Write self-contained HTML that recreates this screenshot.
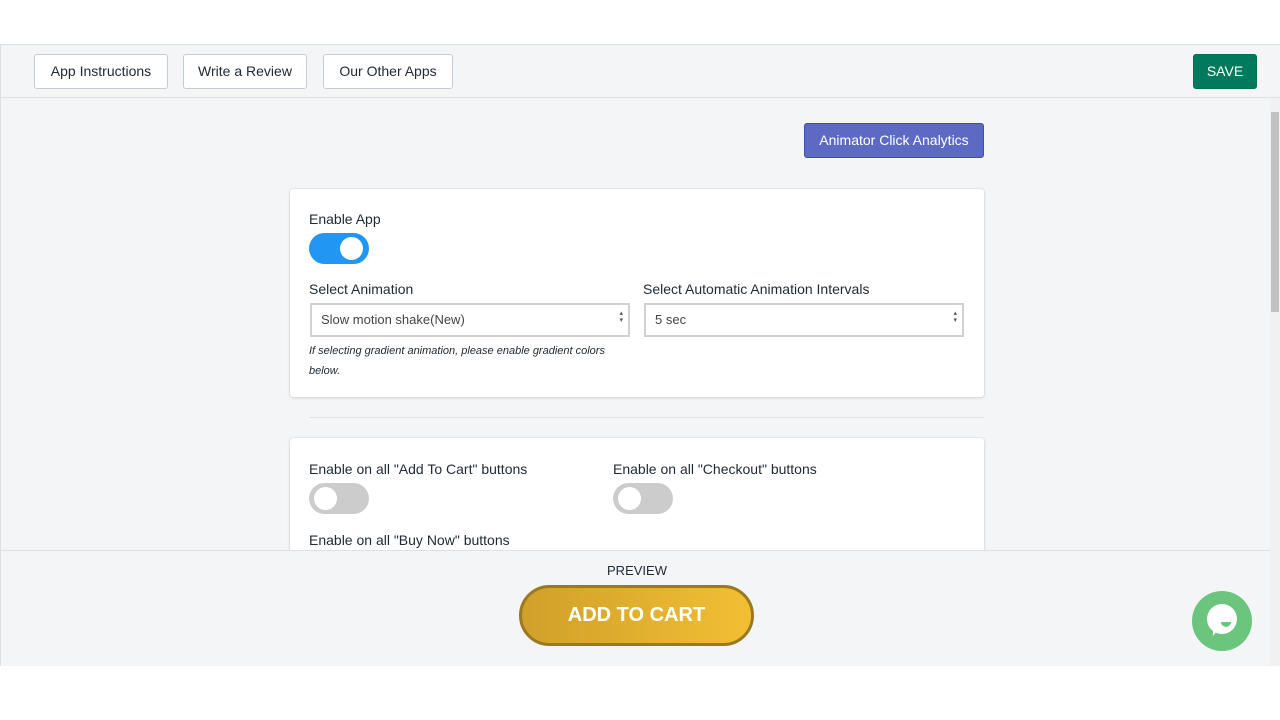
<!DOCTYPE html>
<html><head><style>
*{box-sizing:border-box;margin:0;padding:0}
body{width:1280px;height:720px;background:#fff;font-family:"Liberation Sans",sans-serif;color:#212b36;position:relative;overflow:hidden;font-size:14px}
.abs{position:absolute}
.top{left:0;top:44px;width:1280px;height:54px;background:#f4f5f7;border-top:1px solid #dcdfe3;border-bottom:1px solid #dcdfe3;border-left:1px solid #dcdfe3}
.btn{position:absolute;top:54px;height:35px;background:#fff;border:1px solid #c4cdd5;border-radius:3px;font-size:14px;line-height:33px;text-align:center;color:#212b36}
.main{left:0;top:98px;width:1270px;height:452px;background:#f4f5f7;border-left:1px solid #dcdfe3}
.card{position:absolute;background:#fff;box-shadow:0 0 0 1px rgba(63,63,68,.05),0 1px 3px rgba(63,63,68,.15);border-radius:3px}
.tog{position:absolute;width:60px;height:31px;border-radius:16px}
.tog i{position:absolute;top:4px;width:23px;height:23px;border-radius:50%;background:#fff}
.sel{position:absolute;height:34px;border:2px solid #cfd2d5;background:#fff;font-size:13px;line-height:30px;padding-left:9px;color:#444}
.sel:after{content:"\25B4\A\25BE";white-space:pre;position:absolute;right:5px;top:5px;font-size:7px;line-height:7px;color:#555}
.lbl{position:absolute;font-size:14px}
</style></head><body>
<div class="abs top"></div>
<div class="btn" style="left:34px;width:134px">App Instructions</div>
<div class="btn" style="left:183px;width:124px">Write a Review</div>
<div class="btn" style="left:323px;width:130px">Our Other Apps</div>
<div class="btn" style="left:1193px;width:64px;background:#007a5c;border-color:#006e52;color:#fff">SAVE</div>
<div class="abs main"></div>
<div class="abs" style="left:1270px;top:98px;width:10px;height:568px;background:#f1f1f1"></div>
<div class="abs" style="left:1271px;top:112px;width:8px;height:200px;background:#c1c1c1"></div>
<div class="abs" style="left:804px;top:123px;width:180px;height:35px;background:#5c6ac4;border:1px solid #3f4eae;border-radius:3px;color:#fff;line-height:33px;text-align:center;font-size:14px">Animator Click Analytics</div>
<div class="card" style="left:290px;top:189px;width:694px;height:208px"></div>
<div class="lbl" style="left:309px;top:211px">Enable App</div>
<div class="tog" style="left:309px;top:233px;background:#2196f3"><i style="left:31px"></i></div>
<div class="lbl" style="left:309px;top:281px">Select Animation</div>
<div class="lbl" style="left:643px;top:281px">Select Automatic Animation Intervals</div>
<div class="sel" style="left:310px;top:303px;width:320px">Slow motion shake(New)</div>
<div class="sel" style="left:644px;top:303px;width:320px">5 sec</div>
<div class="lbl" style="left:309px;top:341px;font-size:11px;font-style:italic;line-height:20px;width:320px">If selecting gradient animation, please enable gradient colors below.</div>
<div class="abs" style="left:309px;top:417px;width:675px;height:1px;background:#dfe3e8"></div>
<div class="card" style="left:290px;top:438px;width:694px;height:130px"></div>
<div class="lbl" style="left:309px;top:461px">Enable on all "Add To Cart" buttons</div>
<div class="lbl" style="left:613px;top:461px">Enable on all "Checkout" buttons</div>
<div class="tog" style="left:309px;top:483px;background:#ccc"><i style="left:5px"></i></div>
<div class="tog" style="left:613px;top:483px;background:#ccc"><i style="left:5px"></i></div>
<div class="lbl" style="left:309px;top:532px">Enable on all "Buy Now" buttons</div>
<div class="abs" style="left:0;top:550px;width:1270px;height:116px;background:#f4f5f7;border-top:1px solid #dcdfe3;border-left:1px solid #dcdfe3"></div>
<div class="abs" style="left:0;top:563px;width:1274px;text-align:center;font-size:13px;color:#212b36">PREVIEW</div>
<div class="abs" style="left:519px;top:585px;width:235px;height:61px;border-radius:31px;border:3px solid #9a7a20;background:linear-gradient(90deg,#d0a02a,#f2bf33);color:#fff;font-weight:bold;font-size:20px;text-align:center;line-height:55px">ADD TO CART</div>
<div class="abs" style="left:1192px;top:591px;width:60px;height:60px;border-radius:50%;background:#6bc57d"></div>
<div class="abs" style="left:1207px;top:604px;width:30px;height:30px;border-radius:50%;background:#fff"></div>
<div class="abs" style="left:1213px;top:628px;width:0;height:0;border-left:6px solid #fff;border-bottom:8px solid transparent"></div>
<div class="abs" style="left:1221px;top:622px;width:10px;height:5px;border-radius:0 0 6px 6px;background:#6bc57d"></div>
</body></html>
